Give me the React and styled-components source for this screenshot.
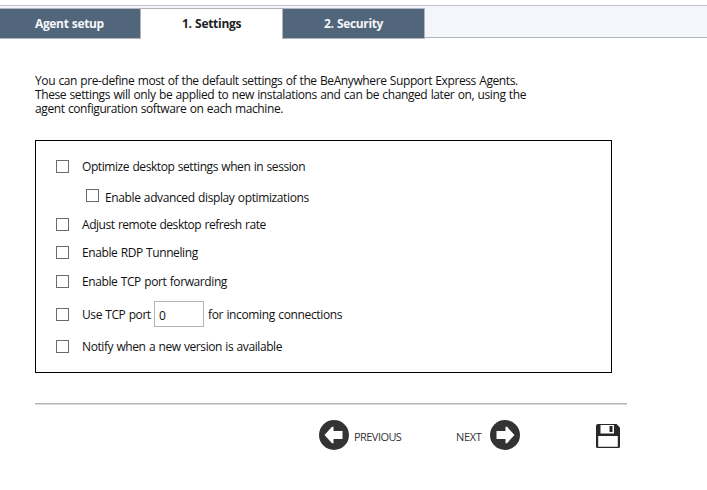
import React from "react";
import styled, { createGlobalStyle } from "styled-components";

const GlobalStyle = createGlobalStyle`
  * { box-sizing: border-box; }
  body {
    margin: 0;
    background: #fff;
    color: #111;
    font: 12px/14px "Open Sans", "Noto Sans", sans-serif;
    word-spacing: 0.6px;
    overflow: hidden;
  }
`;

const Page = styled.div`
  display: flex;
  flex-direction: column;
  width: 707px;
  height: 490px;
`;

const TabBar = styled.nav`
  display: flex;
  height: 34px;
  margin-top: 5px;
  border-top: 1px solid #c4c4c8;
  padding-top: 2px;
  background: linear-gradient(#f3f6fa 2px, #fff 2px);
`;

const Tab = styled.div`
  width: ${(p) => p.$width}px;
  height: 31px;
  padding-left: ${(p) => p.$indent}px;
  border: solid #b1b5bb;
  border-width: ${(p) => (p.$active ? "1px 0 0" : p.$first ? "1px 1px 1px 0" : "1px")};
  background: ${(p) => (p.$active ? "#fff" : "#52667b")};
  color: ${(p) => (p.$active ? "#222" : "#f3f6fa")};
  font-weight: 700;
  line-height: 30px;
  white-space: nowrap;
  letter-spacing: ${(p) => p.$tracking}px;
`;

const TabFiller = styled.div`
  flex: 1;
  height: 30px;
  border-bottom: 1px solid #b1b5bb;
  background: #f3f6fa;
`;

const Intro = styled.p`
  height: 42px;
  margin: 35px 0 24px 35px;
`;

const Line = styled.span`
  display: block;
  white-space: nowrap;
  letter-spacing: ${(p) => p.$tracking}px;
`;

const Panel = styled.section`
  width: 577px;
  height: 233px;
  margin-left: 35px;
  padding: 10px 20px;
  border: 1px solid #000;
`;

const Row = styled.div`
  display: flex;
  align-items: center;
  height: ${(p) => p.$height}px;
  padding-left: ${(p) => (p.$nested ? 30 : 0)}px;
`;

const Checkbox = styled.span`
  flex: none;
  width: 13px;
  height: 13px;
  margin-right: ${(p) => (p.$nested ? 6 : 13)}px;
  border: 1px solid #6b6b6b;
  background: #fff;
`;

const Label = styled.span`
  flex: none;
  width: ${(p) => (p.$width ? p.$width + "px" : "auto")};
  padding-top: ${(p) => p.$drop || 1}px;
  white-space: nowrap;
  letter-spacing: ${(p) => p.$tracking}px;
`;

const PortInput = styled.input`
  width: 50px;
  height: 26px;
  margin: 0 4px 1px 0;
  padding: 2px 4px 0;
  border: 1px solid #b5b5b5;
  outline: 0;
  color: #111;
  font: inherit;
`;

const Rule = styled.div`
  width: 592px;
  height: 2px;
  margin: 30px 0 0 35px;
  background: linear-gradient(#b5b5b5 1px, #dadada 1px);
`;

const Footer = styled.footer`
  display: flex;
  align-items: center;
  height: 30px;
  margin: 15px 0 0 319px;
`;

const Caption = styled.span`
  width: ${(p) => p.$width}px;
  padding-top: 3px;
  color: #333;
  font-size: 11px;
  letter-spacing: ${(p) => p.$tracking}px;
  white-space: nowrap;
`;

const Icon = styled.svg`
  flex: none;
  display: block;
  margin-top: ${(p) => p.$drop || 0}px;
  margin-right: ${(p) => p.$gap || 0}px;
`;

function ArrowIcon({ back, gap }) {
  return (
    <Icon width="30" height="30" viewBox="0 0 30 30" $gap={gap}>
      <circle cx="15" cy="15" r="15" fill="#333" />
      <path
        d="M6.5 11H15.5V6.8H17L24.5 15L17 23.2H15.5V19H6.5Z"
        fill="#fff"
        transform={back ? "translate(30 0) scale(-1 1)" : undefined}
      />
    </Icon>
  );
}

function SaveIcon() {
  return (
    <Icon width="24" height="24" viewBox="0 0 24 24" $drop={2}>
      <path d="M2 0H20.5L24 3.5V22.5Q24 24 22.5 24H1.5Q0 24 0 22.5V2Q0 0 2 0Z" fill="#292929" />
      <path d="M4.5 1H18V9.5H4.5ZM2.2 12H21.8V22.8H2.2Z" fill="#fff" />
      <path d="M13.5 2H16.5V8H13.5Z" fill="#292929" />
    </Icon>
  );
}

const options = [
  { text: "Optimize desktop settings when in session", height: 31, tracking: -0.42 },
  { text: "Enable advanced display optimizations", height: 27, tracking: -0.38, nested: true, drop: 5 },
  { text: "Adjust remote desktop refresh rate", height: 31, tracking: -0.45 },
  { text: "Enable RDP Tunneling", height: 25, tracking: -0.41 },
  { text: "Enable TCP port forwarding", height: 33, tracking: -0.4 },
];

export default function App() {
  return (
    <Page>
      <GlobalStyle />
      <TabBar>
        <Tab $first $width={141} $indent={35} $tracking={-0.35}>Agent setup</Tab>
        <Tab $active $width={141} $indent={41} $tracking={-0.3}>1. Settings</Tab>
        <Tab $width={143} $indent={41} $tracking={-0.35}>2. Security</Tab>
        <TabFiller />
      </TabBar>
      <Intro>
        <Line $tracking={-0.4}>You can pre-define most of the default settings of the BeAnywhere Support Express Agents.</Line>
        <Line $tracking={-0.39}>These settings will only be applied to new instalations and can be changed later on, using the</Line>
        <Line $tracking={-0.4}>agent configuration software on each machine.</Line>
      </Intro>
      <Panel>
        {options.map((o) => (
          <Row key={o.text} $height={o.height} $nested={o.nested}>
            <Checkbox $nested={o.nested} />
            <Label $tracking={o.tracking} $drop={o.drop}>{o.text}</Label>
          </Row>
        ))}
        <Row $height={33}>
          <Checkbox />
          <Label $width={72} $tracking={-0.42}>Use TCP port</Label>
          <PortInput defaultValue="0" />
          <Label $tracking={-0.36}>for incoming connections</Label>
        </Row>
        <Row $height={31}>
          <Checkbox />
          <Label $tracking={-0.41}>Notify when a new version is available</Label>
        </Row>
      </Panel>
      <Rule />
      <Footer>
        <ArrowIcon back gap={5} />
        <Caption $width={102} $tracking={-0.55}>PREVIOUS</Caption>
        <Caption $width={34} $tracking={-0.3}>NEXT</Caption>
        <ArrowIcon gap={76} />
        <SaveIcon />
      </Footer>
    </Page>
  );
}
